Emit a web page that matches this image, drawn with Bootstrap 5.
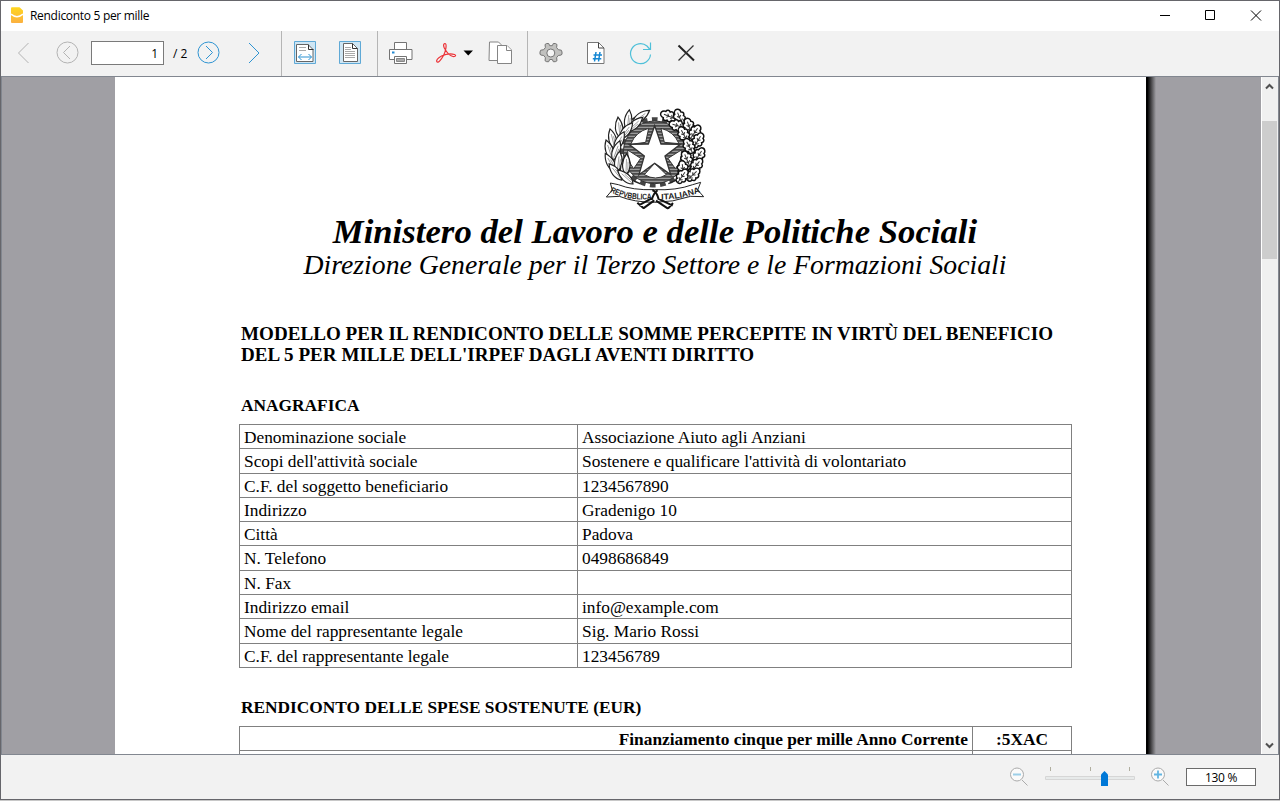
<!DOCTYPE html>
<html lang="it">
<head>
<meta charset="utf-8">
<title>Rendiconto 5 per mille</title>
<link href="https://cdn.jsdelivr.net/npm/bootstrap@5.3.0/dist/css/bootstrap.min.css" rel="stylesheet">
<style>
html,body{height:100%}
body{background:#c8c8c8;font-family:"Open Sans","Noto Sans",sans-serif;font-size:12px;line-height:16px;color:#000;overflow:hidden}
svg{display:block;flex:none}
.app-window{height:800px;border:1px solid #66666b;background:#fff}
.title-bar{height:30px;flex:none}
.title-text{letter-spacing:-.3px}
.tool-bar{height:45px;flex:none;background:#f2f2f2}
.page-input{width:73px;height:24px;border:1px solid #7a7a7a;border-radius:0;padding:0 5px 0 0;margin-top:-1px;font-size:12px;text-align:right;background:#fff;color:#000}
.page-total{width:33px;padding-left:9px}
.viewer{height:679px;flex:none;border:1px solid #828790;background:#a09fa4;overflow:hidden}
.sheet{width:1031px;margin-left:113px;height:900px;background:#fff;flex:none;font-family:"Liberation Serif",serif;padding:18px 74px 0 124px}
.sheet-shadow{width:10px;flex:none;background:linear-gradient(90deg,#000 0,#000 15%,#a09fa4 100%)}
.masthead{width:832px}
.ministry{font-size:34.67px;line-height:36px;margin-top:-7px;letter-spacing:.03px;font-weight:700;font-style:italic;white-space:nowrap}
.direction{font-size:27.73px;line-height:32px;font-style:italic;white-space:nowrap}
.doc-title{font-size:19.07px;line-height:21px;letter-spacing:.03px;font-weight:700;margin:42px 0 0 2px;padding-bottom:1px;white-space:nowrap}
.doc-section{font-size:17.33px;line-height:20px;font-weight:700;margin:30px 0 0 2px;white-space:nowrap}
.form-grid{width:833px;border:solid #808080;border-width:1px 1px 0 1px;font-size:17.33px;line-height:25px}
.form-line{height:24.3px;border-bottom:1px solid #808080}
.form-key{width:338px;padding-left:4px;border-right:1px solid #808080;white-space:nowrap}
.form-val{padding-left:4px;white-space:nowrap}
.spend-name{width:733px;padding-right:4px;border-right:1px solid #808080}
.scroll-rail{width:16px;background:#f0f0f0;box-shadow:-1px 0 #fff}
.scroll-thumb{height:138px;width:15px;background:#cdcdcd;margin-top:27px}
.status-bar{flex:1;background:#f2f2f2;padding-right:23px}
.zoom-box{width:70px;height:18px;border:1px solid #6b6b6b;background:#fff;line-height:17px;letter-spacing:-.3px}
</style>
</head>
<body>
<div class="app-window d-flex flex-column">
  <header class="title-bar d-flex align-items-center">
    <svg width="29" height="30" viewBox="1 1 29 30"><defs><linearGradient id="gold" x2="0" y2="1"><stop stop-color="#ffd61f"/><stop offset="1" stop-color="#fbb040"/></linearGradient></defs><path fill="url(#gold)" d="M12 7.200h7.500L23 10.500V22q0 1-1 1H12q-1 0-1-1V8.200q0-1 1-1z"/><path d="M11 14.200q6 5 12 0" fill="none" stroke="#fff" stroke-width="1.500"/></svg>
    <span class="title-text me-auto">Rendiconto 5 per mille</span>
    <svg width="139" height="30" viewBox="1140 1 139 30" fill="none" stroke="#000"><path d="M1160 15.500h10M1205.500 10.500h9v9h-9zM1251 10.500l10 10M1261 10.500l-10 10"/></svg>
  </header>

  <nav class="tool-bar d-flex align-items-center">
    <svg width="90" height="45" viewBox="1 31 90 45" fill="none" stroke="#b3b3b3"><path d="M28.500 43l-10 10 10 10"/><circle cx="67.500" cy="52.500" r="10.500"/><path d="M70 46l-6.500 6.500 6.500 6.500"/></svg>
    <input class="form-control page-input flex-shrink-0" value="1" aria-label="Pagina">
    <span class="page-total">/ 2</span>
    <svg width="84" height="45" viewBox="197 31 84 45" fill="none" stroke="#2f94d2"><circle cx="208.500" cy="52.500" r="10.500"/><path d="M206 46l6.500 6.500-6.500 6.500M249 43l10 10-10 10"/></svg>
    <svg width="97" height="45" viewBox="281 31 97 45" fill="none">
      <path d="M281.500 31v45M377.500 31v45" stroke="#b5b5b5"/>
      <g stroke="#5fa9d6" fill="#cfe6f4"><path d="M294.500 41.500h21v22h-21zM339.500 41.500h21v22h-21z"/></g>
      <path d="M296.500 44.500h11.500l5 5v12h-16.500zM343.500 43.500h9l5 5v13h-14z" fill="#fff" stroke="#666"/>
      <path d="M308.500 44.500v5h5M352.500 43.500v5h5" stroke="#333"/>
      <path d="M299 47.500h7M299 50.500h7M345 47.500h6M345 49.500h6M345 51.500h10M345 53.500h10M345 55.500h10M345 57.500h10" stroke="#aaa"/>
      <path d="M298.500 57h13M301.500 54l-3 3 3 3M308.500 54l3 3-3 3" stroke="#2d93d3"/>
    </svg>
    <svg width="150" height="45" viewBox="378 31 150 45" fill="none">
      <g stroke="#737373" fill="#fff"><path d="M394.500 50v-7.500h12v7.500"/><path d="M389.500 49.500h22.500v10h-22.500z"/><path d="M394.500 56.500h12v7h-12z"/></g>
      <path d="M396.500 58.500h8v3h-8z" fill="#aaa" stroke="#888"/><path d="M392 52.500h2.500" stroke="#2389d0" stroke-width="2"/>
      <path d="M445 43.500c-2.300.300-1.500 4 .5 6.500 2.200 3.500 4.500 6 7.500 6.500 2.500.300 3.500-1 1.500-2-3-1-9-.300-13 1.500-3.500 2-5.500 4-4.700 5.700 1.200 2 4.500-2.200 6.700-6.200 2.200-4 3.700-11.500 1.500-12z" stroke="#ec3237" stroke-width="1.200"/>
      <path d="M463.500 50.500h9.500l-4.750 5z" fill="#000"/>
      <g stroke="#858585" fill="#fff"><path d="M489.500 42h9l2.500 2.500v16h-12z"/><path d="M497.500 45.500h9.500l4.500 4.500v13.500h-14z"/><path d="M506.500 45.500v5h5"/></g>
      <path d="M527.500 31v45" stroke="#b5b5b5"/>
    </svg>
    <svg width="182" height="45" viewBox="528 31 182 45" fill="none">
      <path d="M546.700 43.500h2l1 2.200h2.600l1-2.200h2l1.700 1-.4 3 1.700 2.200 3 .5.700 1.800v2l-.7 1-3 .5-1.700 2.200.4 3-1.700 1h-2l-1-2.200h-2.600l-1 2.200h-2l-1.700-1 .4-3-1.700-2.200-3-.5-.7-1v-2l.7-1.800 3-.5 1.700-2.200-.4-3z" fill="#c1c1bf" stroke="#757575"/>
      <circle cx="550.800" cy="53" r="4" fill="#f5f5f5" stroke="#757575"/>
      <path d="M587.500 42.500h11l5.500 5.500v15.500h-16.500z" fill="#fff" stroke="#777"/><path d="M598.500 42.500v5.500h5.500" stroke="#444"/>
      <path d="M596 52l-1.500 9.500M600 52l-1.500 9.500M593.500 55h8.500M592.800 58.700h8.500" stroke="#1587d3" stroke-width="1.500"/>
      <path d="M650.500 54.500a10 10 0 1 1-3.500-8.500l3 3.500M650.500 42.500v7h-7.500" stroke="#4fc0d9" stroke-width="1.200"/>
      <path d="M678.500 45.500l15.500 15" stroke="#222" stroke-width="2"/><path d="M693.500 45.500l-15 15" stroke="#333" stroke-width="1.300"/>
    </svg>
  </nav>

  <main class="viewer d-flex">
    <article class="sheet">
      <div class="masthead d-flex flex-column align-items-center">
        <svg width="130" height="125" viewBox="0 0 390 375" role="img" aria-label="Repubblica Italiana">
          <defs>
            <pattern id="hatch" width="6" height="9" patternUnits="userSpaceOnUse"><path fill="#9a9a9a" d="M0 0h6v9H0z"/><path fill="#4a4a4a" d="M0 0h6v5H0z"/></pattern>
            <g id="laurel"><path d="M0 4C-16-12-14-38 0-58C14-38 16-12 0 4z" fill="#fff" stroke="#222" stroke-width="3.500"/><path d="M0 0v-42M5-8v-26" stroke="#777" stroke-width="2"/></g>
            <g id="oak"><path d="M0 0c-8-1-12-6-9-10c-8-3-8-9-4-13c-6-5-3-12 3-13c0-8 6-12 10-12s11 4 10 12c7 2 8 9 3 13c5 4 4 11-4 13c2 5-1 10-9 10z" fill="#fff" stroke="#111" stroke-width="4.500"/><path d="M0 0v-38M0-10l-6-6M0-10l7-6M0-22l-6-6M0-22l6-6" stroke="#333" stroke-width="3" fill="none"/></g>
          </defs>
          <circle cx="194" cy="172" r="99" fill="none" stroke="#444" stroke-width="13" stroke-dasharray="17 13.500"/>
          <circle cx="194" cy="172" r="94" fill="url(#hatch)" stroke="#333" stroke-width="3"/>
          <g fill="#fff" stroke="#333" stroke-width="3"><path d="M122 148q15-38 54-48l-9 42zM213 100q38 9 54 46l-44-4zM113 165l39 25-21 31q-19-24-18-56zM274 165q3 31-18 56l-22-31zM163 239l31-34 35 34q-32 20-66 0z"/></g>
          <path d="M194 92l19 55 58 1-46 35 17 56-48-34-47 34 16-56-46-35 58-1z" fill="#fff" stroke="#333" stroke-width="4"/>
          <path d="M150 266Q70 235 76 165Q80 90 165 50M235 266Q318 235 314 165Q311 90 220 50" fill="none" stroke="#222" stroke-width="4"/>
          <g>
            <use href="#laurel" transform="translate(132 80) rotate(54)"/><use href="#laurel" transform="translate(112 102) rotate(6)"/><use href="#laurel" transform="translate(115 106) rotate(48)"/><use href="#laurel" transform="translate(90 124) rotate(-6)"/><use href="#laurel" transform="translate(92 129) rotate(38)"/><use href="#laurel" transform="translate(74 158) rotate(-14)"/><use href="#laurel" transform="translate(76 162) rotate(27)"/><use href="#laurel" transform="translate(66 190) rotate(-18)"/><use href="#laurel" transform="translate(70 192) rotate(20)"/><use href="#laurel" transform="translate(74 226) rotate(-29)"/><use href="#laurel" transform="translate(82 226) rotate(7)"/><use href="#laurel" transform="translate(93 252) rotate(-38)"/><use href="#laurel" transform="translate(104 252) rotate(-4)"/><use href="#laurel" transform="translate(108 234) rotate(2)"/><use href="#laurel" transform="translate(126 264) rotate(-48)"/>
          </g>
          <g>
            <use href="#oak" transform="translate(257 72) rotate(-68)"/><use href="#oak" transform="translate(277 88) rotate(-22)"/><use href="#oak" transform="translate(284 98) rotate(-74)"/><use href="#oak" transform="translate(304 116) rotate(-18)"/><use href="#oak" transform="translate(301 131) rotate(35)"/><use href="#oak" transform="translate(292 139) rotate(-28)"/><use href="#oak" transform="translate(312 156) rotate(31)"/><use href="#oak" transform="translate(308 174) rotate(-28)"/><use href="#oak" transform="translate(314 200) rotate(33)"/><use href="#oak" transform="translate(299 213) rotate(-23)"/><use href="#oak" transform="translate(305 229) rotate(38)"/><use href="#oak" transform="translate(282 245) rotate(-8)"/><use href="#oak" transform="translate(292 255) rotate(47)"/><use href="#oak" transform="translate(263 263) rotate(35)"/>
          </g>
          <path d="M61 264l24 5q42 17 108 15q66 3 115-15l24-7-9 23 18 20-39-1q-53 18-108 18-61 0-106-18l-39 2 18-21z" fill="#fff" stroke="#222" stroke-width="3"/>
          <path d="M187 286q13 3 19 27M203 286q-11 5-18 29M185 310l-39 21M193 316l-33 24M203 310l45 22M198 317l36 24M142 323l19 17M249 324l-15 17" stroke="#111" stroke-width="6" fill="none"/>
          <path id="mottoA" d="M60 291Q115 319 189 312" fill="none"/><path id="mottoB" d="M214 314Q277 313 336 290" fill="none"/>
          <g font-family="Liberation Sans" font-weight="700" font-size="25" fill="#222"><text><textPath href="#mottoA" textLength="129" lengthAdjust="spacingAndGlyphs">REPVBBLICA</textPath></text><text><textPath href="#mottoB" textLength="120" lengthAdjust="spacingAndGlyphs">ITALIANA</textPath></text></g>
        </svg>
        <div class="ministry">Ministero del Lavoro e delle Politiche Sociali</div>
        <div class="direction">Direzione Generale per il Terzo Settore e le Formazioni Sociali</div>
      </div>
      <div class="doc-title">MODELLO PER IL RENDICONTO DELLE SOMME PERCEPITE IN VIRTÙ DEL BENEFICIO<br>DEL 5 PER MILLE DELL'IRPEF DAGLI AVENTI DIRITTO</div>
      <div class="doc-section">ANAGRAFICA</div>
      <div class="form-grid mt-2">
        <div class="form-line d-flex"><div class="form-key">Denominazione sociale</div><div class="form-val">Associazione Aiuto agli Anziani</div></div>
        <div class="form-line d-flex"><div class="form-key">Scopi dell'attività sociale</div><div class="form-val">Sostenere e qualificare l'attività di volontariato</div></div>
        <div class="form-line d-flex"><div class="form-key">C.F. del soggetto beneficiario</div><div class="form-val">1234567890</div></div>
        <div class="form-line d-flex"><div class="form-key">Indirizzo</div><div class="form-val">Gradenigo 10</div></div>
        <div class="form-line d-flex"><div class="form-key">Città</div><div class="form-val">Padova</div></div>
        <div class="form-line d-flex"><div class="form-key">N. Telefono</div><div class="form-val">0498686849</div></div>
        <div class="form-line d-flex"><div class="form-key">N. Fax</div><div class="form-val"></div></div>
        <div class="form-line d-flex"><div class="form-key">Indirizzo email</div><div class="form-val">info@example.com</div></div>
        <div class="form-line d-flex"><div class="form-key">Nome del rappresentante legale</div><div class="form-val">Sig. Mario Rossi</div></div>
        <div class="form-line d-flex"><div class="form-key">C.F. del rappresentante legale</div><div class="form-val">123456789</div></div>
      </div>
      <div class="doc-section">RENDICONTO DELLE SPESE SOSTENUTE (EUR)</div>
      <div class="form-grid mt-2 fw-bold">
        <div class="form-line d-flex"><div class="spend-name text-end">Finanziamento cinque per mille Anno Corrente</div><div class="flex-fill text-center">:5XAC</div></div>
        <div class="form-line d-flex"><div class="spend-name"></div></div>
      </div>
    </article>
    <div class="sheet-shadow"></div>
    <aside class="scroll-rail ms-auto d-flex flex-column">
      <svg width="16" height="17" viewBox="1262 77 16 17" fill="none" stroke="#505050" stroke-width="2"><path d="M1266 88.500l3.500-3.500 3.500 3.500"/></svg>
      <div class="scroll-thumb"></div>
      <svg class="mt-auto" width="16" height="17" viewBox="1262 737 16 17" fill="none" stroke="#505050" stroke-width="2"><path d="M1266 743.500l3.500 3.500 3.500-3.500"/></svg>
    </aside>
  </main>

  <footer class="status-bar d-flex align-items-center justify-content-end">
    <svg width="186" height="44" viewBox="1000 755 186 44" fill="none">
      <g stroke="#ababab" fill="#fafafa"><circle cx="1017" cy="774.500" r="6.500"/><path d="M1022 780l5.500 5.500"/><circle cx="1158" cy="774.500" r="6.500"/><path d="M1163 780l5.500 5.500"/></g>
      <path d="M1013 774.500h8" stroke="#9ccfe8" stroke-width="2"/><path d="M1154 774.500h8M1158 770.500v8" stroke="#63b5e2" stroke-width="1.800"/>
      <path d="M1045.500 776.500h89v3h-89z" fill="#e7eaea" stroke="#d6d6d6"/><path d="M1050.500 767v4M1090.500 767v4M1129.500 767v4" stroke="#b0ae9f"/>
      <path d="M1101 786v-11.500l3.500-3.500 3.500 3.500v11.500z" fill="#0078d7"/>
    </svg>
    <div class="zoom-box text-center">130 %</div>
  </footer>
</div>
<script src="https://cdn.jsdelivr.net/npm/bootstrap@5.3.0/dist/js/bootstrap.bundle.min.js"></script>
</body>
</html>
